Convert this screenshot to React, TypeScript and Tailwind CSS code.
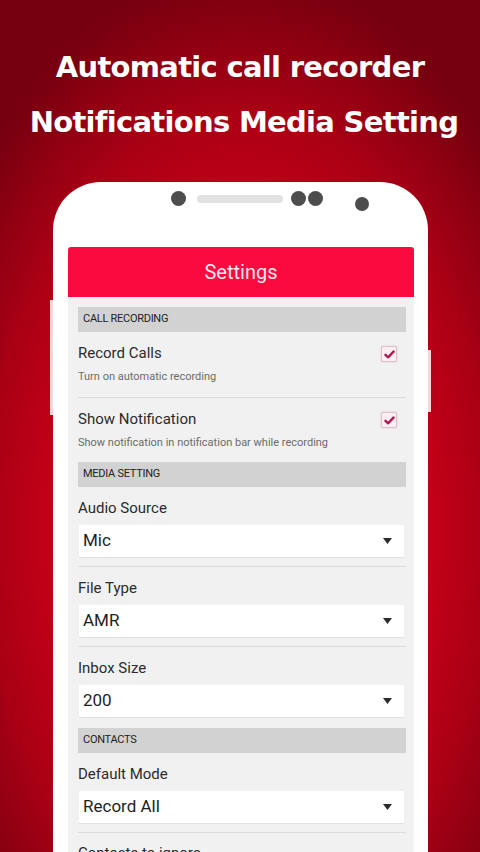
import React from 'react';

const Section: React.FC<{ title: string }> = ({ title }) => (
  <div className="h-[25px] bg-[#d2d2d2] flex items-center pl-[5px] text-[11px] text-[#222] tracking-tight">
    {title}
  </div>
);

const CheckBox: React.FC = () => (
  <div className="w-[16px] h-[16px] rounded-[2px] border border-[#d9c3cb] bg-[#fbeef2] flex items-center justify-center shadow-[0_0_2px_rgba(220,90,130,0.35)]">
    <svg width="11" height="9" viewBox="0 0 11 9">
      <path d="M1.5 4.8 L4.2 7.3 L9.5 1.6" fill="none" stroke="#b0164f" strokeWidth="2.4" strokeLinecap="round" strokeLinejoin="round" />
    </svg>
  </div>
);

const ToggleRow: React.FC<{ title: string; sub: string; divider?: boolean }> = ({ title, sub, divider }) => (
  <div className={divider ? 'border-b border-[#dcdcdc]' : ''}>
    <div className={`flex items-start justify-between pt-[11px] ${divider ? 'pb-[13px]' : 'pb-[12px]'}`}>
      <div>
        <div className="text-[15px] leading-[20px] text-[#2b2b2b]">{title}</div>
        <div className="text-[11px] leading-[14px] text-[#6b6b6b] mt-[7px]">{sub}</div>
      </div>
      <div className="mt-[3px] mr-[9px]">
        <CheckBox />
      </div>
    </div>
  </div>
);

const Spinner: React.FC<{ label: string; value: string; divider?: boolean }> = ({ label, value, divider }) => (
  <div className={divider ? 'border-b border-[#dcdcdc] pb-[9px]' : 'pb-[11px]'}>
    <div className="pt-[11px] text-[15px] leading-[20px] text-[#2b2b2b]">{label}</div>
    <div className="mt-[7px] ml-[1px] mr-[2px] h-[32px] bg-white flex items-center justify-between pl-[4px] pr-[12px] shadow-[0_1px_1px_rgba(0,0,0,0.06)]">
      <span className="text-[17px] text-[#1e1e1e]">{value}</span>
      <svg width="9" height="6" viewBox="0 0 9 6">
        <path d="M0 0 H9 L4.5 6 Z" fill="#2a2a2a" />
      </svg>
    </div>
  </div>
);

const Dot: React.FC<{ size?: string }> = ({ size = 'w-[15px] h-[15px]' }) => (
  <div className={`${size} rounded-full bg-[#4d4d4d]`} />
);

export default function App() {
  return (
    <div className="relative w-[480px] h-[852px] overflow-hidden bg-[radial-gradient(ellipse_70%_65%_at_50%_62%,#e4001d_0%,#d30019_45%,#a90014_75%,#77000f_100%)] font-['Roboto',sans-serif]">
      <div className="pt-[40px] h-[182px] text-center text-white font-['DejaVu_Sans',sans-serif] font-bold text-[29px] leading-[55px] tracking-[-0.7px]">
        <div>Automatic call recorder</div>
        <div className="pl-[8px]">Notifications Media Setting</div>
      </div>

      <div className="relative ml-[53px] w-[375px] h-[700px] bg-white rounded-t-[48px] pt-[9px] pl-[15px] pr-[14px]">
        {/* side buttons */}
        <div className="absolute left-[-3px] top-[118px] w-[3px] h-[115px] bg-[#f4d6da]" />
        <div className="absolute right-[-3px] top-[168px] w-[3px] h-[62px] bg-[#f4d6da]" />

        <div className="h-[56px] flex items-start pl-[103px]">
          <Dot />
          <div className="ml-[11px] mt-[4px] w-[86px] h-[8px] rounded-full bg-[#e2e2e2]" />
          <div className="ml-[8px] flex gap-[2px]">
            <Dot />
            <Dot />
          </div>
          <div className="ml-[32px] mt-[6px]">
            <Dot size="w-[14px] h-[14px]" />
          </div>
        </div>

        <div className="h-[50px] bg-[#fa0a3e] rounded-t-[3px] flex items-center justify-center text-[20px] text-[#ffe6ec]">
          Settings
        </div>

        <div className="bg-[#f1f1f1] pt-[10px] pl-[10px] pr-[8px] h-[600px] flex flex-col">
          <Section title="CALL RECORDING" />
          <ToggleRow title="Record Calls" sub="Turn on automatic recording" divider />
          <ToggleRow title="Show Notification" sub="Show notification in notification bar while recording" />
          <Section title="MEDIA SETTING" />
          <Spinner label="Audio Source" value="Mic" divider />
          <Spinner label="File Type" value="AMR" divider />
          <Spinner label="Inbox Size" value="200" />
          <Section title="CONTACTS" />
          <Spinner label="Default Mode" value="Record All" divider />
          <div className="pt-[10px] text-[15px] leading-[20px] text-[#2b2b2b]">Contacts to ignore</div>
        </div>
      </div>
    </div>
  );
}
